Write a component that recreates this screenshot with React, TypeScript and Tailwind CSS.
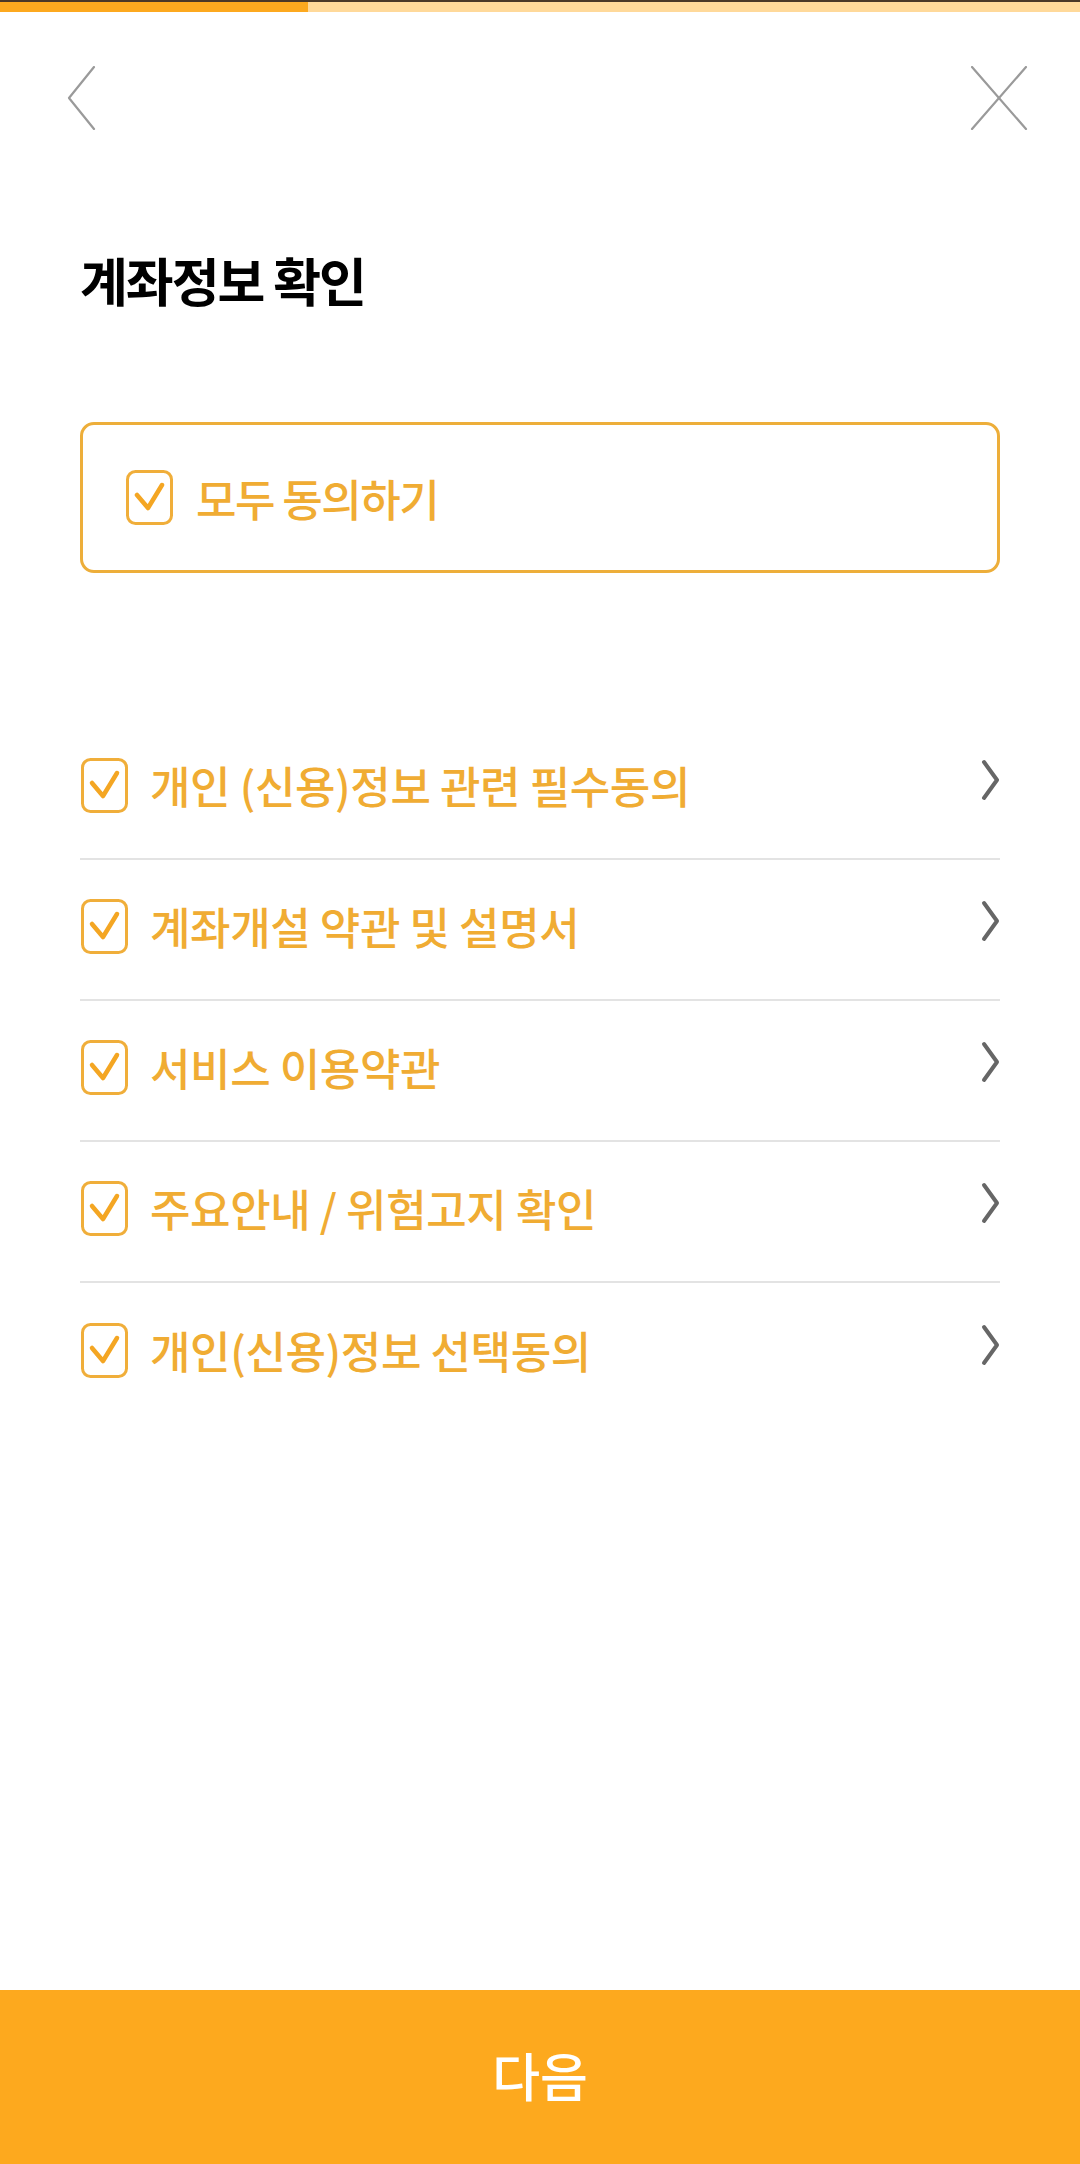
import React from "react";

const items = [
  "개인 (신용)정보 관련 필수동의",
  "계좌개설 약관 및 설명서",
  "서비스 이용약관",
  "주요안내 / 위험고지 확인",
  "개인(신용)정보 선택동의",
];

function CheckBox() {
  return (
    <svg width="47" height="55" viewBox="0 0 47 55" className="shrink-0">
      <rect x="1.5" y="1.5" width="44" height="52" rx="8" fill="none" stroke="#F0AE3A" strokeWidth="3" />
      <polyline points="11,25 22,38 36,15" fill="none" stroke="#F4A623" strokeWidth="4.5" strokeLinecap="round" strokeLinejoin="round" />
    </svg>
  );
}

function Chevron() {
  return (
    <svg width="19" height="42" viewBox="0 0 19 42" className="mb-[10px] shrink-0">
      <polyline points="3,3 16,21 3,39" fill="none" stroke="#666666" strokeWidth="4" strokeLinecap="round" strokeLinejoin="round" />
    </svg>
  );
}

export default function App() {
  return (
    <div className="flex h-[2164px] w-[1080px] flex-col bg-white font-['Noto_Sans_CJK_KR','Noto_Sans',sans-serif]">
      <div className="flex h-[12px] border-t-2 border-[#4a3828]">
        <div className="w-[308px] bg-[#FDA91F]" />
        <div className="flex-1 bg-[#FFD99A]" />
      </div>

      <div className="flex items-start justify-between pl-[67px] pr-[52px] pt-[54px]">
        <svg width="30" height="64" viewBox="0 0 30 64">
          <polyline points="27,1 2,32 27,63" fill="none" stroke="#9a9a9a" strokeWidth="2.2" strokeLinecap="round" strokeLinejoin="round" />
        </svg>
        <svg width="58" height="64" viewBox="0 0 58 64">
          <line x1="2" y1="1" x2="56" y2="63" stroke="#9a9a9a" strokeWidth="2.2" strokeLinecap="round" />
          <line x1="56" y1="1" x2="2" y2="63" stroke="#9a9a9a" strokeWidth="2.2" strokeLinecap="round" />
        </svg>
      </div>

      <h1 className="ml-[80px] mt-[124px] text-[52px] font-bold leading-[52px] tracking-[-2px] text-black">
        계좌정보 확인
      </h1>

      <div className="mx-[80px] mt-[116px] flex h-[151px] items-center rounded-[14px] border-[3px] border-[#EDAE3A] pl-[43px]">
        <CheckBox />
        <span className="ml-[23px] text-[44px] font-medium leading-none tracking-[-1.5px] text-[#F0AC33]">모두 동의하기</span>
      </div>

      <div className="mx-[80px] mt-[146px] flex flex-col">
        {items.map((t, i) => (
          <div
            key={t}
            className={
              i < items.length - 1
                ? "flex h-[141px] items-center border-b-2 border-[#E3E3E3] pb-[7px] pl-px"
                : "flex h-[141px] items-center pb-[7px] pl-px"
            }
          >
            <CheckBox />
            <span className="ml-[22px] flex-1 text-[44px] font-medium leading-none tracking-[-0.4px] text-[#F0AC33]">{t}</span>
            <Chevron />
          </div>
        ))}
      </div>

      <button className="mt-auto flex h-[174px] w-full items-center justify-center bg-[#FDA91E] pb-[4px] text-[52px] font-medium leading-none text-white">
        다음
      </button>
    </div>
  );
}
